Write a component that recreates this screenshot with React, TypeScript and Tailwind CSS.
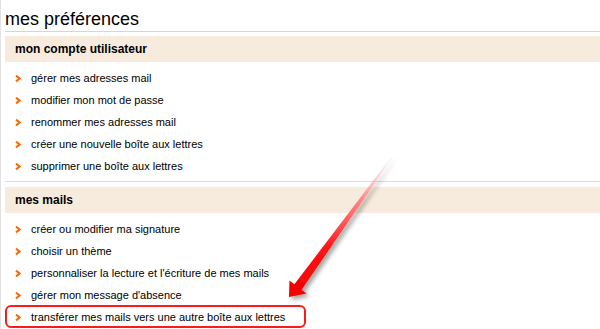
// Preferences page: two sections of orange-chevron links, with a red
// annotation arrow and a box around the mail-forwarding entry.

type Section = {
  title: string;
  links: string[];
};

const SECTIONS: Section[] = [
  {
    title: "mon compte utilisateur",
    links: [
      "gérer mes adresses mail",
      "modifier mon mot de passe",
      "renommer mes adresses mail",
      "créer une nouvelle boîte aux lettres",
      "supprimer une boîte aux lettres",
    ],
  },
  {
    title: "mes mails",
    links: [
      "créer ou modifier ma signature",
      "choisir un thème",
      "personnaliser la lecture et l'écriture de mes mails",
      "gérer mon message d'absence",
      "transférer mes mails vers une autre boîte aux lettres",
    ],
  },
];

const HIGHLIGHTED = "transférer mes mails vers une autre boîte aux lettres";

function Chevron() {
  return (
    <svg width="6" height="7" viewBox="0 0 6 7" className="shrink-0">
      <path
        d="M1 0.6 L4.6 3.5 L1 6.4"
        fill="none"
        stroke="#ff6600"
        strokeWidth="2"
      />
    </svg>
  );
}

function LinkRow({ label }: { label: string }) {
  const marked = label === HIGHLIGHTED;
  return (
    <li className="relative flex h-[22px] items-center gap-[10px] pl-[10px]">
      <Chevron />
      <span className="cursor-pointer">{label}</span>
      {marked && (
        <span className="pointer-events-none absolute -top-px left-0 h-[23px] w-[301px] rounded-[6px] border-2 border-[#ff1a1a]" />
      )}
    </li>
  );
}

function SectionBlock({ section, last }: { section: Section; last: boolean }) {
  return (
    <section
      className={
        last ? "mt-[5px]" : "mt-[5px] border-b border-[#dedede] pb-[4px]"
      }
    >
      <h2 className="flex h-[26px] items-center bg-[#f7ebdd] pl-[10px] text-[12px] font-bold text-black">
        {section.title}
      </h2>
      <ul className="pt-[5px] text-[11px] text-black">
        {section.links.map((link) => (
          <LinkRow key={link} label={link} />
        ))}
      </ul>
    </section>
  );
}

function AnnotationArrow() {
  return (
    <svg
      className="pointer-events-none absolute left-0 top-0"
      width="600"
      height="329"
      viewBox="0 0 600 329"
    >
      <defs>
        <linearGradient
          id="arrowFill"
          gradientUnits="userSpaceOnUse"
          x1="392"
          y1="157"
          x2="289"
          y2="297"
        >
          <stop offset="0" stopColor="#ffd6d6" stopOpacity="0.2" />
          <stop offset="0.3" stopColor="#ff7a7a" stopOpacity="0.85" />
          <stop offset="0.65" stopColor="#ff1414" />
          <stop offset="1" stopColor="#f00000" />
        </linearGradient>
        <filter id="arrowShadow" x="-20%" y="-20%" width="140%" height="140%">
          <feDropShadow
            dx="3"
            dy="3"
            stdDeviation="2.2"
            floodColor="#000"
            floodOpacity="0.35"
          />
        </filter>
      </defs>
      <polygon
        points="289,297 289.5,280.5 294.4,284.3 391.5,156.6 392.5,157.4 301.6,289.7 306.5,293.5"
        fill="url(#arrowFill)"
        filter="url(#arrowShadow)"
      />
    </svg>
  );
}

export default function App() {
  return (
    <div className="relative h-[329px] w-[600px] overflow-hidden bg-white font-['Liberation_Sans',Arial,sans-serif]">
      <div className="h-full border-l border-[#e2e2e2] pl-[4px]">
        <h1 className="border-b border-[#d6d6d6] pb-[2px] pt-[9px] text-[18px] leading-[20px] text-black">
          mes préférences
        </h1>
        <div className="-mt-px">
          {SECTIONS.map((section, i) => (
            <SectionBlock
              key={section.title}
              section={section}
              last={i === SECTIONS.length - 1}
            />
          ))}
        </div>
      </div>
      <AnnotationArrow />
    </div>
  );
}
